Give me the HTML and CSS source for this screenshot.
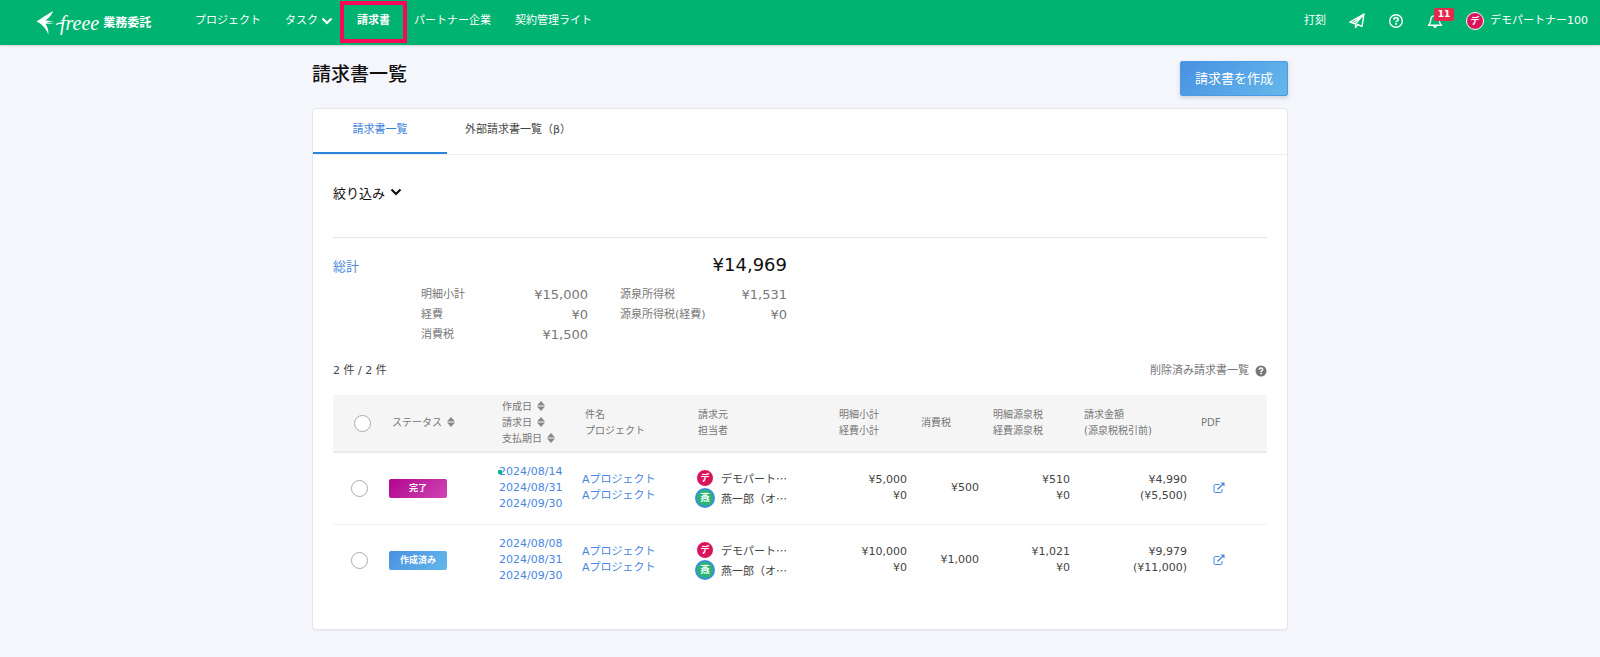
FILE: index.html
```html
<!DOCTYPE html>
<html lang="ja">
<head>
  <meta charset="UTF-8">
  <meta name="viewport" content="width=device-width, initial-scale=1.0">
  <title>請求書一覧</title>
  <link rel="stylesheet" href="styles.css">
</head>
<body>
  <svg class="sprite" aria-hidden="true">
    <symbol id="chevron" viewBox="0 0 12 8"><path d="M1.500 1.500 L6 6 L10.500 1.500" fill="none" stroke="currentColor" stroke-width="2.200"/></symbol>
    <symbol id="sort" viewBox="0 0 8 10"><path d="M4 0 L8 4.400 H0 Z M0 5.600 H8 L4 10 Z" fill="currentColor"/></symbol>
    <symbol id="external" viewBox="0 0 12 12"><path d="M6.500 2.500 H2.200 Q1 2.500 1 3.700 V9.300 Q1 10.500 2.200 10.500 H7.800 Q9 10.500 9 9.300 V7" fill="none" stroke="currentColor"/><path d="M4.500 7.500 L10 2" stroke="currentColor" stroke-width="1.500"/><path d="M7.500 0.500 H11.500 V4.500 Z" fill="currentColor"/></symbol>
  </svg>

  <header class="navbar">
    <a class="logo" href="#">
      <svg class="logo-mark" viewBox="0 0 28 24" aria-hidden="true">
        <path d="M17 0 C10 4 5 8 0.500 10.500 C5 12.500 9 16 12.500 23.500 C12.500 19 11.500 15.500 9.500 12.800 L18.500 12.500 L10 11.200 L18 10.200 L9.500 9.500 C13 7 16 4 17 0 Z" fill="currentColor"/>
        <path d="M20 13.500 Q23 11.500 28 12" fill="none" stroke="currentColor" stroke-width="1.500"/>
      </svg>
      <span class="logo-name">freee</span>
      <span class="logo-sub">業務委託</span>
    </a>
    <nav class="nav-main">
      <a href="#">プロジェクト</a>
      <a class="has-menu" href="#">タスク<svg class="chevron"><use href="#chevron"/></svg></a>
      <a class="current" href="#">請求書</a>
      <a href="#">パートナー企業</a>
      <a href="#">契約管理ライト</a>
    </nav>
    <div class="nav-side">
      <a href="#">打刻</a>
      <a href="#" aria-label="送信">
        <svg class="icon" viewBox="0 0 16 16"><path d="M0.800 9.200 L15 1 L13 13.300 L8.600 11.500 L6.500 14.500 V10.800 Z M6.500 10.800 L15 1 L3.500 10.200" fill="none" stroke="currentColor" stroke-width="1.400" stroke-linejoin="round"/></svg>
      </a>
      <a href="#" aria-label="ヘルプ">
        <svg class="icon" viewBox="0 0 16 16"><circle cx="8" cy="8" r="6.300" fill="none" stroke="currentColor" stroke-width="1.400"/><path d="M5.900 6.600 Q6 4.700 8 4.700 Q10.100 4.700 10.100 6.400 Q10.100 7.300 9 7.900 Q8.100 8.400 8.100 9.300" fill="none" stroke="currentColor" stroke-width="1.700"/><rect x="7.200" y="10.100" width="1.800" height="1.700" fill="currentColor"/></svg>
      </a>
      <a class="bell" href="#" aria-label="お知らせ">
        <svg class="icon" viewBox="0 0 16 16"><path d="M1.500 12.300 Q3.800 10.500 3.800 6.500 Q4 3 8 2.600 Q12 3 12.200 6.500 Q12.200 10.500 14.500 12.300 Z" fill="none" stroke="currentColor" stroke-width="1.400" stroke-linejoin="round"/><path d="M6 13 H10 Q9.700 15 8 15 Q6.300 15 6 13 Z M7.200 1 H8.800 V3 H7.200 Z" fill="currentColor"/></svg>
        <span class="bell-count">11</span>
      </a>
      <a class="account" href="#"><span class="avatar avatar-company">デ</span>デモパートナー100</a>
    </div>
  </header>

  <main class="container">
    <div class="page-head">
      <h1>請求書一覧</h1>
      <button class="btn-create" type="button">請求書を作成</button>
    </div>

    <section class="card">
      <nav class="tabs">
        <a class="active" href="#">請求書一覧</a>
        <a href="#">外部請求書一覧（β）</a>
      </nav>

      <div class="card-body">
        <button class="filter" type="button">絞り込み<svg class="chevron"><use href="#chevron"/></svg></button>

        <div class="summary">
          <h2>総計</h2>
          <div class="total">¥14,969</div>
          <dl>
            <div><dt>明細小計</dt><dd>¥15,000</dd></div>
            <div><dt>経費</dt><dd>¥0</dd></div>
            <div><dt>消費税</dt><dd>¥1,500</dd></div>
          </dl>
          <dl>
            <div><dt>源泉所得税</dt><dd>¥1,531</dd></div>
            <div><dt>源泉所得税(経費)</dt><dd>¥0</dd></div>
          </dl>
        </div>

        <div class="list-head">
          <span>2 件 / 2 件</span>
          <a href="#">削除済み請求書一覧
            <svg class="help" viewBox="0 0 12 12"><circle cx="6" cy="6" r="5.500" fill="currentColor"/><path d="M4.200 4.700 Q4.300 3.100 6 3.100 Q7.700 3.100 7.700 4.500 Q7.700 5.300 6.800 5.800 Q6.100 6.200 6.100 7" fill="none" stroke="#fff" stroke-width="1.500"/><rect x="5.300" y="7.700" width="1.600" height="1.500" fill="#fff"/></svg>
          </a>
        </div>

        <table class="invoices">
          <colgroup>
            <col class="col-check"><col class="col-status"><col class="col-date"><col class="col-title"><col class="col-client">
            <col class="col-subtotal"><col class="col-tax"><col class="col-withholding"><col class="col-total"><col class="col-pdf">
          </colgroup>
          <thead>
            <tr>
              <th class="check"><input type="checkbox" aria-label="すべて選択"></th>
              <th>ステータス<svg class="sort"><use href="#sort"/></svg></th>
              <th>作成日<svg class="sort"><use href="#sort"/></svg><br>請求日<svg class="sort"><use href="#sort"/></svg><br>支払期日<svg class="sort"><use href="#sort"/></svg></th>
              <th>件名<br>プロジェクト</th>
              <th>請求元<br>担当者</th>
              <th>明細小計<br>経費小計</th>
              <th>消費税</th>
              <th>明細源泉税<br>経費源泉税</th>
              <th>請求金額<br>(源泉税税引前)</th>
              <th>PDF</th>
            </tr>
          </thead>
          <tbody>
            <tr>
              <td class="check"><input type="checkbox" aria-label="選択"></td>
              <td><span class="status status-done">完了</span></td>
              <td class="dates unread"><a href="#">2024/08/14<br>2024/08/31<br>2024/09/30</a></td>
              <td><a href="#">Aプロジェクト<br>Aプロジェクト</a></td>
              <td>
                <div class="person"><span class="avatar avatar-company">デ</span>デモパート…</div>
                <div class="person"><span class="avatar avatar-user">燕</span>燕一郎（オ…</div>
              </td>
              <td class="num">¥5,000<br>¥0</td>
              <td class="num">¥500</td>
              <td class="num">¥510<br>¥0</td>
              <td class="num">¥4,990<br>(¥5,500)</td>
              <td class="pdf"><a href="#" aria-label="PDFを開く"><svg class="external"><use href="#external"/></svg></a></td>
            </tr>
            <tr>
              <td class="check"><input type="checkbox" aria-label="選択"></td>
              <td><span class="status status-created">作成済み</span></td>
              <td class="dates"><a href="#">2024/08/08<br>2024/08/31<br>2024/09/30</a></td>
              <td><a href="#">Aプロジェクト<br>Aプロジェクト</a></td>
              <td>
                <div class="person"><span class="avatar avatar-company">デ</span>デモパート…</div>
                <div class="person"><span class="avatar avatar-user">燕</span>燕一郎（オ…</div>
              </td>
              <td class="num">¥10,000<br>¥0</td>
              <td class="num">¥1,000</td>
              <td class="num">¥1,021<br>¥0</td>
              <td class="num">¥9,979<br>(¥11,000)</td>
              <td class="pdf"><a href="#" aria-label="PDFを開く"><svg class="external"><use href="#external"/></svg></a></td>
            </tr>
          </tbody>
        </table>
      </div>
    </section>
  </main>
</body>
</html>
```
FILE: styles.css
```css
* {
  box-sizing: border-box;
}
body {
  margin: 0;
  background: #f5f6fb;
  color: #444;
  font-family: "DejaVu Sans", "Noto Sans CJK JP", sans-serif;
  font-size: 11px;
  line-height: 16px;
}
a {
  color: #4a86e0;
  text-decoration: none;
}
button {
  font-family: inherit;
  cursor: pointer;
}
.sprite {
  display: none;
}

/* header */
.navbar {
  display: flex;
  align-items: center;
  height: 45px;
  padding: 0 12px 4px 36px;
  background: #00b371;
  box-shadow: 0 1px 2px rgba(0, 0, 0, 0.15);
}
.navbar a {
  color: #fff;
}
.logo {
  display: flex;
  align-items: center;
  width: 147px;
  padding-top: 4px;
}
.logo-mark {
  width: 28px;
  height: 24px;
}
.logo-name {
  margin-left: -4px;
  font-family: "Liberation Serif", serif;
  font-size: 20px;
  font-style: italic;
}
.logo-sub {
  margin-left: 4px;
  font-size: 12px;
  font-weight: bold;
}
.nav-main {
  display: flex;
  align-items: center;
}
.nav-main a {
  display: flex;
  align-items: center;
  padding: 0 12px;
}
.nav-main .has-menu {
  gap: 3px;
}
.chevron {
  width: 12px;
  height: 8px;
}
.nav-main .current {
  height: 42px;
  margin: 2px -5px 0;
  padding: 0 13px 2px;
  border: 4px solid #f5085a;
  font-weight: bold;
}
.nav-side {
  display: flex;
  align-items: center;
  gap: 23px;
  margin-left: auto;
}
.icon {
  display: block;
  width: 16px;
  height: 16px;
}
.bell {
  position: relative;
}
.bell-count {
  position: absolute;
  top: -5px;
  left: 7px;
  width: 20px;
  height: 13px;
  border-radius: 2px;
  background: #e6294b;
  font-size: 9px;
  font-weight: bold;
  line-height: 12px;
  text-align: center;
}
.account {
  display: flex;
  align-items: center;
  gap: 6px;
}
.avatar {
  flex: none;
  width: 18px;
  height: 18px;
  border: 1px solid #fff;
  border-radius: 50%;
  color: #fff;
  font-size: 9px;
  font-weight: bold;
  line-height: 16px;
  text-align: center;
}
.avatar-company {
  background: #d8145c;
}
.avatar-user {
  width: 20px;
  height: 20px;
  border: 2px solid #3b8ede;
  background: #2bb573;
}

/* page */
.container {
  max-width: 976px;
  margin: 0 auto;
  padding: 16px 0 28px;
}
.page-head {
  display: flex;
  justify-content: space-between;
  margin-bottom: 12px;
}
h1 {
  margin: 0;
  color: #111;
  font-size: 19px;
  font-weight: 500;
  line-height: 26px;
}
.btn-create {
  height: 35px;
  padding: 0 14px 2px;
  border: 1px solid #4a9ae4;
  border-radius: 2px;
  background: linear-gradient(135deg, #4a90e2, #63b8ea);
  box-shadow: 0 2px 4px rgba(0, 0, 0, 0.15);
  color: #fff;
  font-size: 13px;
}
.card {
  border: 1px solid #e4e6ea;
  border-radius: 4px;
  background: #fff;
  box-shadow: 0 1px 1px rgba(0, 0, 0, 0.05);
}
.tabs {
  display: flex;
  border-bottom: 1px solid #eee;
}
.tabs a {
  min-width: 134px;
  height: 45px;
  padding: 13px 18px 0;
  color: #444;
  text-align: center;
}
.tabs .active {
  border-bottom: 2px solid #2a84dc;
  color: #3a80dc;
}
.card-body {
  padding: 0 20px 33px;
}
.filter {
  display: flex;
  align-items: center;
  gap: 5px;
  width: 100%;
  height: 83px;
  padding: 0 0 8px;
  border: 0;
  border-bottom: 1px solid #e6e6e6;
  background: none;
  color: #111;
  font-size: 13px;
}

/* totals */
.summary {
  display: grid;
  grid-template-columns: 167px 167px;
  column-gap: 32px;
  width: 454px;
  margin-left: 88px;
  padding-top: 15px;
  color: #777;
}
.summary h2 {
  margin: 2px 0 0 -88px;
  color: #4a86e0;
  font-size: 13px;
  font-weight: normal;
  line-height: 24px;
}
.total {
  color: #111;
  font-size: 18px;
  line-height: 24px;
  text-align: right;
}
.summary dl {
  margin: 6px 0 0;
}
.summary dl div {
  display: flex;
  justify-content: space-between;
  line-height: 20px;
}
.summary dd {
  margin: 0;
  font-size: 13px;
}
.list-head {
  display: flex;
  justify-content: space-between;
  padding: 18px 0 16px;
}
.list-head a {
  display: flex;
  align-items: center;
  gap: 6px;
  color: #777;
}
.help {
  width: 12px;
  height: 12px;
}

/* invoice table */
.invoices {
  width: 100%;
  border-collapse: collapse;
  table-layout: fixed;
}
.col-check { width: 51px; }
.col-status { width: 110px; }
.col-date { width: 83px; }
.col-title { width: 113px; }
.col-client { width: 141px; }
.col-subtotal { width: 82px; }
.col-tax { width: 72px; }
.col-withholding { width: 91px; }
.col-total { width: 117px; }
.col-pdf { width: 74px; }
.invoices th {
  height: 57px;
  padding: 0 0 0 8px;
  border-bottom: 2px solid #eaeaea;
  background: #f5f5f5;
  color: #777;
  font-size: 10px;
  font-weight: normal;
  text-align: left;
  white-space: nowrap;
}
.invoices td {
  height: 72px;
  padding: 0 6px 0 5px;
}
.invoices tbody tr + tr td {
  border-top: 1px solid #eee;
}
.invoices .check {
  padding-left: 18px;
}
.invoices th.check {
  padding-left: 21px;
}
.check input {
  display: block;
  width: 17px;
  height: 17px;
  margin: 0;
  border: 1px solid #aaa;
  border-radius: 50%;
  background: #fff;
  appearance: none;
}
.sort {
  width: 8px;
  height: 10px;
  margin-left: 5px;
  color: #888;
  vertical-align: -1px;
}
.status {
  display: block;
  width: 58px;
  height: 19px;
  border-radius: 2px;
  color: #fff;
  font-size: 9px;
  font-weight: bold;
  line-height: 18px;
  text-align: center;
}
.status-done {
  background: linear-gradient(135deg, #b1058f, #cf45b3);
}
.status-created {
  background: linear-gradient(135deg, #4a90e2, #63b8ea);
}
.dates {
  position: relative;
}
.unread::before {
  content: "";
  position: absolute;
  top: 17px;
  left: 4px;
  width: 4px;
  height: 4px;
  border-radius: 1px;
  background: #00b98a;
}
.person {
  display: flex;
  align-items: center;
  gap: 6px;
  height: 20px;
  font-family: "Noto Sans CJK JP", sans-serif;
}
.person .avatar-company {
  margin: 0 1px;
}
.invoices .num {
  text-align: right;
}
.invoices .pdf {
  padding-left: 20px;
}
.external {
  display: block;
  width: 12px;
  height: 12px;
}
```
